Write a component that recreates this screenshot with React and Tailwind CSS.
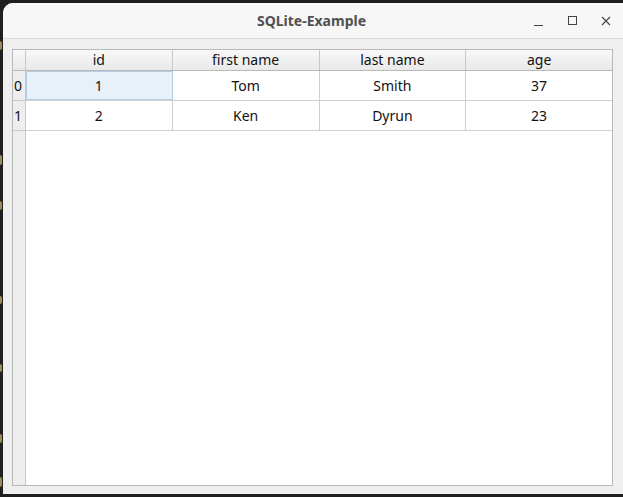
import React from 'react';

const columns = ['id', 'first name', 'last name', 'age'];
const rows = [
  ['1', 'Tom', 'Smith', '37'],
  ['2', 'Ken', 'Dyrun', '23'],
];

// slivers of editor text peeking out behind the window
const crumbs = [
  { top: 41, h: 9 },
  { top: 155, h: 10 },
  { top: 201, h: 9 },
  { top: 296, h: 8 },
  { top: 364, h: 8 },
  { top: 434, h: 9 },
  { top: 477, h: 10 },
];

const App = () => {
  return (
    <div
      className="relative w-[623px] h-[497px] bg-[#1f1f1f] overflow-hidden"
      style={{ fontFamily: '"Noto Sans", "DejaVu Sans", sans-serif' }}
    >
      {crumbs.map((c) => (
        <div
          key={c.top}
          className="absolute left-0 w-[2px] bg-[#9c8c5c] rounded-r-sm"
          style={{ top: c.top, height: c.h }}
        />
      ))}

      <div className="absolute left-[3px] top-[3px] w-[630px] h-[491px] flex flex-col bg-[#efefef] rounded-tl-[10px] rounded-tr-[10px] overflow-hidden">
        {/* Title bar */}
        <div className="relative h-[36px] shrink-0 flex items-center justify-center bg-[#f7f7f7] border-b border-[#dadada]">
          <span className="text-[14px] font-bold text-[#505050] pr-[13px]">SQLite-Example</span>
          <div className="absolute right-[10px] top-0 h-full flex items-center">
            <div className="w-[34px] flex justify-center">
              <div className="w-[9px] h-px bg-[#444] mt-[9px]" />
            </div>
            <div className="w-[34px] flex justify-center">
              <div className="w-[9px] h-[9px] border border-[#444]" />
            </div>
            <div className="w-[34px] flex justify-center">
              <svg width="10" height="10" viewBox="0 0 10 10">
                <path d="M1 1 L9 9 M9 1 L1 9" stroke="#444" strokeWidth="1.1" />
              </svg>
            </div>
          </div>
        </div>

        {/* Body */}
        <div className="flex-1 pl-[9px] pt-[10px] pb-[8px]">
          <div className="w-[601px] h-full border border-[#b9b9b9] bg-white flex flex-col text-[14px] text-[#111]">
            {/* Header */}
            <div className="flex h-[21px] shrink-0 border-b border-[#b9b9b9] bg-gradient-to-b from-[#f8f8f8] to-[#e9e9e9]">
              <div className="w-[13px] shrink-0 border-r border-[#c8c8c8]" />
              {columns.map((c, i) => (
                <div
                  key={c}
                  className={`flex-1 flex items-center justify-center leading-none ${i < 3 ? 'border-r border-[#c8c8c8]' : ''}`}
                >
                  {c}
                </div>
              ))}
            </div>

            <div className="flex flex-1">
              {/* Vertical header */}
              <div className="w-[13px] shrink-0 bg-[#eeeeee] border-r border-[#c8c8c8] flex flex-col">
                {rows.map((_, i) => (
                  <div
                    key={i}
                    className="h-[30px] flex items-center justify-start pl-[1px] text-[14px] border-b border-[#c8c8c8]"
                  >
                    {i}
                  </div>
                ))}
              </div>

              {/* Cells */}
              <div className="flex-1 flex flex-col">
                {rows.map((r, ri) => (
                  <div key={ri} className="flex h-[30px] border-b border-[#d0d0d0]">
                    {r.map((v, ci) => (
                      <div
                        key={ci}
                        className={`flex-1 flex items-center justify-center ${ci < 3 ? 'border-r border-[#d0d0d0]' : ''} ${ri === 0 && ci === 0 ? 'bg-[#e6f1fa] outline outline-1 -outline-offset-1 outline-[#b4cde2]' : ''}`}
                      >
                        {v}
                      </div>
                    ))}
                  </div>
                ))}
              </div>
            </div>
          </div>
        </div>
      </div>
    </div>
  );
};

export default App;
